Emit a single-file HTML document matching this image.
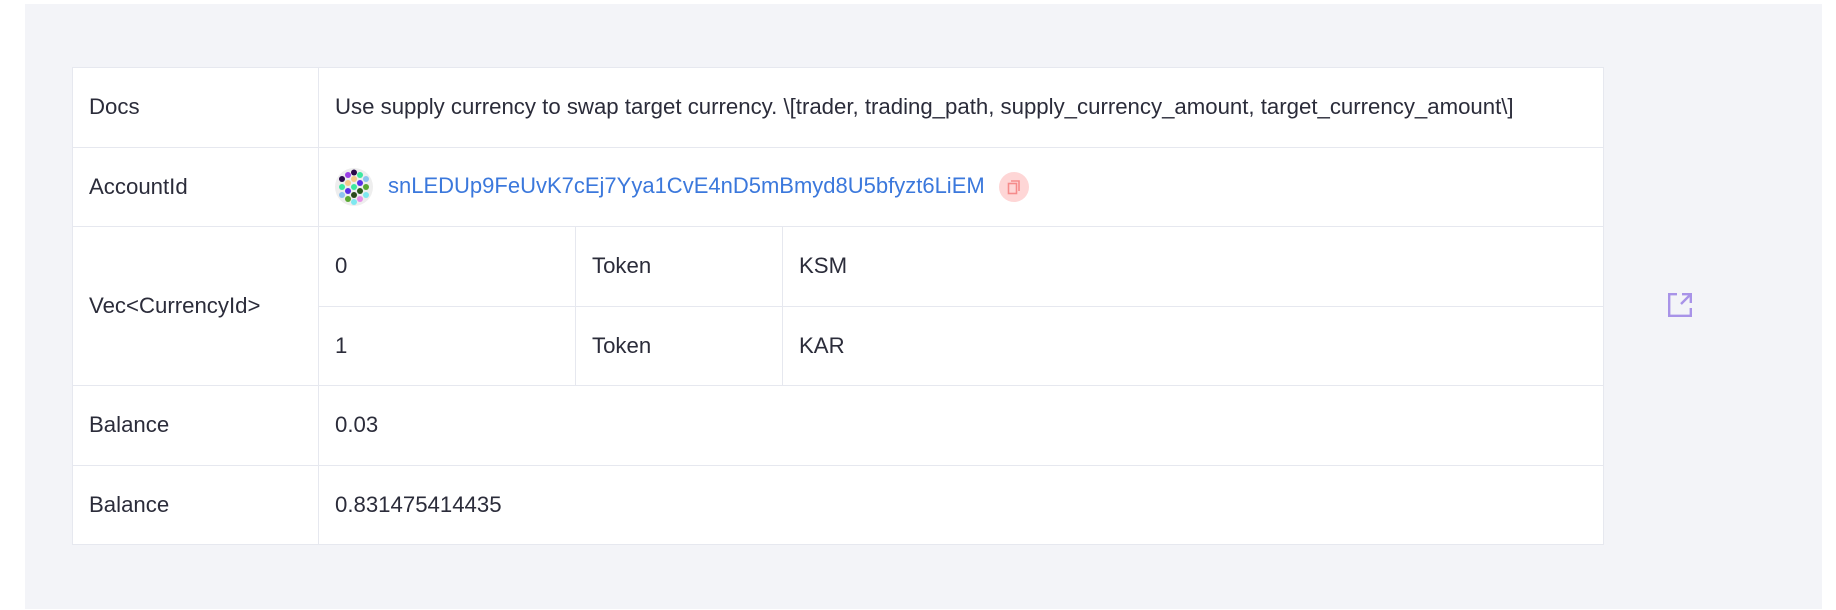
<!DOCTYPE html>
<html><head><meta charset="utf-8"><style>
*{margin:0;padding:0;box-sizing:border-box}
html,body{width:1836px;height:610px;background:#fff;overflow:hidden}
body{font-family:"Liberation Sans",Arial,sans-serif;color:#2b2c3a;font-size:22.2px}
.panel{position:absolute;left:25px;top:4px;width:1797px;height:605px;background:#f3f4f8}
table{position:absolute;left:72px;top:67px;width:1532px;border-collapse:collapse;background:#fff;table-layout:fixed}
td{border:1px solid #e6e8ef;height:79.5px;padding:0 0 0 16px;vertical-align:middle;white-space:nowrap;overflow:visible}
a{color:#3b78dc;text-decoration:none;font-size:22px}
.av{display:inline-block;width:38px;height:38px;border-radius:50%;background:#eeeeee;vertical-align:middle;margin-right:15px;position:relative}
.cp{display:inline-block;width:30px;height:30px;border-radius:50%;background:#fed6d6;vertical-align:middle;margin-left:14px;position:relative}
</style></head><body>
<div class="panel"></div>
<table>
<colgroup><col style="width:246px"><col style="width:257px"><col style="width:207px"><col></colgroup>
<tr><td>Docs</td><td colspan="3">Use supply currency to swap target currency. \[trader, trading_path, supply_currency_amount, target_currency_amount\]</td></tr>
<tr><td>AccountId</td><td colspan="3"><span class="av"><svg width="38" height="38" viewBox="0 0 38 38">
<circle cx="19" cy="4.5" r="3" fill="#2a0a4a"/><circle cx="13" cy="7" r="3" fill="#9b3ee8"/><circle cx="25" cy="7" r="3" fill="#3de8a0"/>
<circle cx="7" cy="11" r="3" fill="#2a0a4a"/><circle cx="19" cy="11" r="3" fill="#f6c98a"/><circle cx="31" cy="11" r="3" fill="#8ec4f0"/>
<circle cx="13" cy="15" r="3" fill="#f6c98a"/><circle cx="25" cy="15" r="3" fill="#5a2ee8"/>
<circle cx="7" cy="19" r="3" fill="#3de8a0"/><circle cx="19" cy="19" r="3" fill="#3de8a0"/><circle cx="31" cy="19" r="3" fill="#5aa832"/>
<circle cx="13" cy="23" r="3" fill="#5a2ee8"/><circle cx="25" cy="23" r="3" fill="#2a5a1a"/>
<circle cx="7" cy="27" r="3" fill="#8ec4f0"/><circle cx="19" cy="27" r="3" fill="#2a4a1a"/><circle cx="31" cy="27" r="3" fill="#7ee8f0"/>
<circle cx="13" cy="31" r="3" fill="#5aa832"/><circle cx="25" cy="31" r="3" fill="#e890e8"/><circle cx="19" cy="34" r="3" fill="#7ee8f0"/>
</svg></span><a>snLEDUp9FeUvK7cEj7Yya1CvE4nD5mBmyd8U5bfyzt6LiEM</a><span class="cp"><svg width="30" height="30" viewBox="0 0 30 30" fill="none" stroke="#f58b8b" stroke-width="1.6"><rect x="9.5" y="11.5" width="8" height="10"/><path d="M12 9h8v10"/></svg></span></td></tr>
<tr><td rowspan="2">Vec&lt;CurrencyId&gt;</td><td>0</td><td>Token</td><td>KSM</td></tr>
<tr><td>1</td><td>Token</td><td>KAR</td></tr>
<tr><td>Balance</td><td colspan="3">0.03</td></tr>
<tr><td>Balance</td><td colspan="3">0.831475414435</td></tr>
</table>
<svg style="position:absolute;left:1668px;top:293px" width="24" height="24" viewBox="0 0 24 24" fill="none" stroke="#a893e8" stroke-width="2.4"><path d="M9 1.2H1.2v21.6h21.6V15"/><path d="M14 1.2h8.8V10"/><path d="M22 2L13 11"/></svg>
</body></html>
